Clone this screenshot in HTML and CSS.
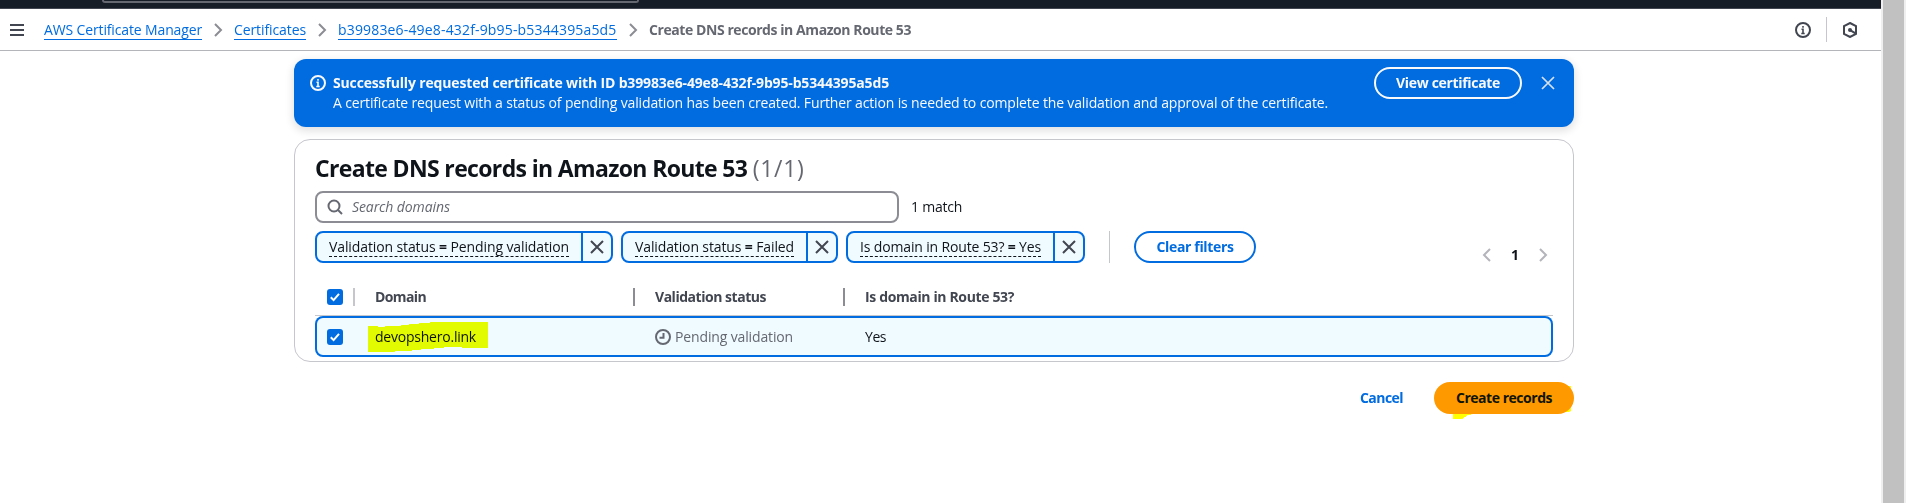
FILE: index.html
```
<!DOCTYPE html>
<html lang="en">
<head>
<meta charset="utf-8">
<title>Create DNS records in Amazon Route 53</title>
<link rel="stylesheet" href="styles.css">
</head>
<body>
<svg class="sprite" aria-hidden="true">
  <symbol id="chevron" viewBox="0 0 16 16"><path d="M5 2l6 6-6 6"/></symbol>
  <symbol id="close" viewBox="0 0 16 16"><path d="M2 2l12 12M14 2L2 14"/></symbol>
  <symbol id="info" viewBox="0 0 16 16"><circle cx="8" cy="8" r="7"/><path class="thin" d="M6.3 11.5h3.4M8 11.5V7.3H6.5M8 4v1.8"/></symbol>
  <symbol id="check" viewBox="0 0 16 16"><path d="M3.8 8.2l2.8 2.9 5.4-6.3"/></symbol>
</svg>
<div class="page">
  <div class="app">
    <header class="topnav"><div class="topnav-search"></div></header>
    <nav class="toolbar">
      <button class="menu" aria-label="Menu"><span></span><span></span><span></span></button>
      <ol class="crumbs">
        <li><a class="crumb-service">AWS Certificate Manager</a></li>
        <li><svg class="icon sep"><use href="#chevron"/></svg><a class="crumb-certs">Certificates</a></li>
        <li><svg class="icon sep"><use href="#chevron"/></svg><a class="crumb-id">b39983e6-49e8-432f-9b95-b5344395a5d5</a></li>
        <li><svg class="icon sep"><use href="#chevron"/></svg><span class="crumb-current">Create DNS records in Amazon Route 53</span></li>
      </ol>
      <div class="tools">
        <svg class="icon"><use href="#info"/></svg>
        <span class="tools-divider"></span>
        <svg class="icon" viewBox="0 0 16 16"><path d="M8 1l6 3.2v7.6L8 15l-6-3.2V4.2z"/><circle cx="8" cy="8" r="2" class="solid"/><path d="M8.5 8.3l5 3"/></svg>
      </div>
    </nav>
    <main class="content">
      <section class="flash">
        <svg class="icon flash-icon"><use href="#info"/></svg>
        <div class="flash-text">
          <div class="flash-title">Successfully requested certificate with ID b39983e6-49e8-432f-9b95-b5344395a5d5</div>
          <div class="flash-body">A certificate request with a status of pending validation has been created. Further action is needed to complete the validation and approval of the certificate.</div>
        </div>
        <button class="btn btn-flash">View certificate</button>
        <svg class="icon flash-close"><use href="#close"/></svg>
      </section>
      <section class="card">
        <h1>Create DNS records in Amazon Route 53 <span>(1/1)</span></h1>
        <div class="search-row">
          <div class="search">
            <svg class="icon" viewBox="0 0 16 16"><circle cx="7" cy="7" r="5.5"/><path d="M11 11l4 4"/></svg>
            <span class="placeholder">Search domains</span>
          </div>
          <span class="matches">1 match</span>
        </div>
        <div class="filter-row">
          <div class="token token-pending"><span class="token-label"><span>Validation status <b>=</b> Pending validation</span></span><span class="token-x"><svg class="icon"><use href="#close"/></svg></span></div>
          <div class="token token-failed"><span class="token-label"><span>Validation status <b>=</b> Failed</span></span><span class="token-x"><svg class="icon"><use href="#close"/></svg></span></div>
          <div class="token token-route"><span class="token-label"><span>Is domain in Route 53? <b>=</b> Yes</span></span><span class="token-x"><svg class="icon"><use href="#close"/></svg></span></div>
          <span class="filter-divider"></span>
          <button class="btn btn-clear">Clear filters</button>
          <div class="pager">
            <svg class="icon flip"><use href="#chevron"/></svg>
            <span>1</span>
            <svg class="icon"><use href="#chevron"/></svg>
          </div>
        </div>
        <div class="table">
          <div class="tr head">
            <div class="cell pick"><span class="checkbox"><svg class="icon"><use href="#check"/></svg></span></div>
            <div class="cell"><span class="th-domain">Domain</span></div>
            <div class="cell"><span class="th-status">Validation status</span></div>
            <div class="cell"><span class="th-route">Is domain in Route 53?</span></div>
          </div>
          <div class="tr row">
            <div class="cell pick"><span class="checkbox"><svg class="icon"><use href="#check"/></svg></span></div>
            <div class="cell"><span class="domain">devopshero.link<svg class="marker" viewBox="0 0 120 30"><path d="M0 4h10v1h7V4h16V3h8V2h10V1h11V0h58v26H94v-1H76v1H66v1H53v1H44v1H27v1H0z"/></svg></span></div>
            <div class="cell status"><svg class="icon" viewBox="0 0 16 16"><circle cx="8" cy="8" r="7"/><path d="M8.5 4v4.7H4.5"/></svg><span>Pending validation</span></div>
            <div class="cell"><span class="yes">Yes</span></div>
          </div>
        </div>
      </section>
      <footer class="actions">
        <a class="cancel">Cancel</a>
        <div class="create-wrap">
          <svg class="underlay" viewBox="0 0 140 38"><path d="M19 30h22v2h-4v1h-4v1h-1v1h-2v1h-1v1H19zM128 4h9v25l-2 1h-10z"/></svg>
          <button class="btn btn-primary">Create records</button>
        </div>
      </footer>
    </main>
  </div>
  <div class="scrollbar"><div class="thumb"></div></div>
</div>
</body>
</html>
```
FILE: styles.css
```
* { box-sizing: border-box; }

body {
  margin: 0;
  overflow: hidden;
  background: #fff;
  color: #0f141a;
  font: 14px/20px "Open Sans", "Noto Sans", sans-serif;
}

button { font: inherit; margin: 0; padding: 0; background: none; border: 0; }

.sprite { display: none; }

.icon {
  display: block;
  flex: none;
  width: 16px;
  height: 16px;
  fill: none;
  stroke: currentColor;
  stroke-width: 2;
}
.thin { stroke-width: 1.6; }
.solid { fill: currentColor; stroke: none; }

.page { display: flex; height: 503px; }
.app { flex: 1; min-width: 0; }

.scrollbar { flex: none; width: 25px; padding: 0 2px; background: #efefef; }
.thumb { height: 100%; background: #c1c1c1; }

.topnav { height: 9px; padding-left: 102px; background: #161d26; border-bottom: 1px solid #424650; }
.topnav-search { width: 537px; height: 3px; border: 2px solid #656871; border-top: 0; border-radius: 0 0 6px 6px; }

.toolbar {
  display: flex;
  align-items: center;
  height: 42px;
  padding: 0 23px 0 10px;
  border-bottom: 1px solid #b4b4bb;
}
.menu { display: flex; flex-direction: column; gap: 3px; width: 14px; }
.menu span { height: 2px; background: #424650; }

.crumbs { display: flex; list-style: none; margin: 0 0 0 20px; padding: 0; }
.crumbs li { display: flex; align-items: center; }
.crumbs a { height: 20px; color: #006ce0; box-shadow: 0 -1px 0 #006ce0 inset; white-space: nowrap; }
.sep { margin: 0 8px; color: #8c8c94; }
.crumb-service { width: 158px; letter-spacing: -0.137px; }
.crumb-certs { width: 72px; letter-spacing: -0.098px; }
.crumb-id { width: 279px; letter-spacing: 0.164px; }
.crumb-current { color: #656871; font-weight: 700; letter-spacing: -0.427px; }

.tools { display: flex; align-items: center; margin-left: auto; gap: 15px; color: #424650; }
.tools-divider { width: 1px; height: 25px; background: #c6c6cd; }

.content { width: 1280px; margin: 8px 0 0 294px; }

.btn {
  display: block;
  flex: none;
  height: 32px;
  border: 2px solid currentColor;
  border-radius: 20px;
  font-weight: 700;
  line-height: 20px;
  text-align: center;
  white-space: nowrap;
}

.flash {
  display: flex;
  align-items: flex-start;
  height: 68px;
  padding: 8px 18px 0 16px;
  border-radius: 12px;
  background: #006ce0;
  color: #f9f9fa;
  box-shadow: 0 3px 8px 1px rgba(0, 7, 22, 0.12);
}
.flash-icon { margin: 8px 7px 0 0; }
.flash-text { flex: 1; padding-top: 6px; white-space: nowrap; }
.flash-title { font-weight: 700; letter-spacing: -0.156px; }
.flash-body { font-weight: 500; letter-spacing: -0.144px; }
.btn-flash { width: 148px; color: #f9f9fa; letter-spacing: -0.32px; }
.flash-close { margin: 8px 0 0 18px; color: #d8e2ee; stroke-width: 1.7; }

.card {
  height: 223px;
  margin-top: 12px;
  padding: 14px 20px 0;
  border: 1px solid #c6c6cd;
  border-radius: 16px;
  background: #fff;
}
.card h1 { margin: 0; height: 28px; font-size: 23px; line-height: 28px; font-weight: 700; letter-spacing: -0.65px; }
.card h1 span { color: #656871; font-weight: 400; letter-spacing: 0.7px; }

.search-row { display: flex; align-items: center; margin-top: 9px; }
.search {
  display: flex;
  align-items: center;
  width: 584px;
  height: 32px;
  padding-left: 10px;
  border: 2px solid #8c8c94;
  border-radius: 8px;
  color: #656871;
}
.placeholder { margin-left: 9px; font-style: italic; letter-spacing: -0.1px; }
.matches { margin-left: 12px; letter-spacing: -0.24px; }

.filter-row { display: flex; align-items: center; height: 32px; margin-top: 8px; }
.token {
  display: flex;
  height: 32px;
  margin-right: 8px;
  border: 2px solid #006ce0;
  border-radius: 8px;
  background: #f0fbff;
  white-space: nowrap;
}
.token-label { flex: 1; padding: 4px 0 0 12px; }
.token-label > span { display: block; height: 20px; border-bottom: 1px dashed #0f141a; margin-right: 12px; }
.token-label b { font-weight: 700; }
.token-x { display: flex; align-items: center; justify-content: center; width: 30px; border-left: 2px solid #006ce0; color: #424650; }
.token-pending { width: 298px; letter-spacing: -0.11px; }
.token-failed { width: 217px; letter-spacing: -0.122px; }
.token-route { width: 239px; letter-spacing: -0.153px; margin-right: 0; }
.filter-divider { width: 1px; height: 32px; margin: 0 24px; background: #c6c6cd; }
.btn-clear { width: 122px; color: #006ce0; letter-spacing: -0.35px; }
.pager { display: flex; align-items: center; gap: 16px; height: 16px; margin: 16px 2px 0 auto; color: #b4b4bb; }
.pager span { width: 8px; color: #0f141a; font-weight: 700; }
.flip { transform: scaleX(-1); }

.table { margin-top: 12px; }
.tr { display: grid; grid-template-columns: 38px 280px 210px 1fr; align-items: center; height: 41px; }
.head { padding-top: 3px; border-bottom: 1px solid #c6c6cd; color: #424650; font-weight: 700; }
.head .cell { display: flex; align-items: center; height: 18px; padding-left: 20px; border-left: 2px solid #8c8c94; }
.head .cell:nth-child(2) { border-left-color: #c6c6cd; }
.row { border-radius: 8px; background: #f0fbff; box-shadow: inset 0 0 0 2px #006ce0; }
.row .cell { padding-left: 22px; }
.tr .cell.pick { padding-left: 12px; border-left: 0; }
.checkbox { display: block; width: 16px; height: 16px; border-radius: 3px; background: #006ce0; color: #fff; }
.th-domain { letter-spacing: -0.6px; }
.th-status { letter-spacing: -0.471px; }
.th-route { letter-spacing: -0.362px; }
.domain { position: relative; letter-spacing: -0.224px; }
.marker { position: absolute; left: -7px; top: -5px; width: 120px; height: 30px; fill: #f2ff00; mix-blend-mode: multiply; }
.status { display: flex; align-items: center; gap: 4px; color: #656871; letter-spacing: -0.139px; }
.yes { letter-spacing: -0.45px; }

.actions { display: flex; align-items: center; justify-content: flex-end; margin-top: 20px; }
.cancel { margin-right: 31px; color: #006ce0; font-weight: 700; letter-spacing: -0.55px; }
.create-wrap { position: relative; }
.underlay { position: absolute; left: 0; top: 0; width: 140px; height: 38px; fill: #ff0; }
.btn-primary { position: relative; width: 140px; border-color: #ff9900; background: #ff9900; color: #0f1400; letter-spacing: -0.476px; }
```
